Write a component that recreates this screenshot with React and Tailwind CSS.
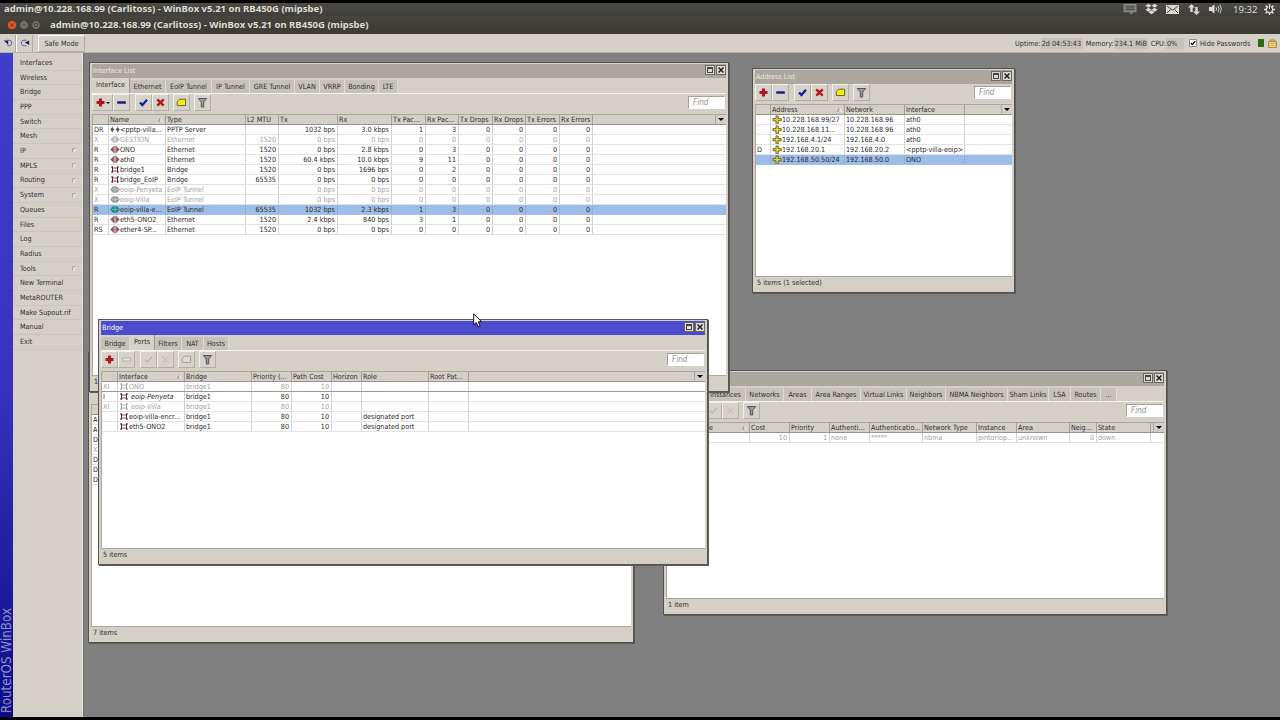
import React from "react";
import clsx from "clsx";
import { FaDropbox } from "react-icons/fa";

const TITLE = "admin@10.228.168.99 (Carlitoss) - WinBox v5.21 on RB450G (mipsbe)";

const MENU = [
  ["Interfaces"], ["Wireless"], ["Bridge"], ["PPP"], ["Switch"], ["Mesh"],
  ["IP", true], ["MPLS", true], ["Routing", true], ["System", true],
  ["Queues"], ["Files"], ["Log"], ["Radius"], ["Tools", true],
  ["New Terminal"], ["MetaROUTER"], ["Make Supout.rif"], ["Manual"], ["Exit"],
];

/* ---------- row icons ---------- */

const EthIcon = ({ color = "#a04a58", bar = "#4a2a30" }) => (
  <svg className="h-[9px] w-[10px] shrink-0" viewBox="0 0 10 9">
    <path d="M.3 4.5 3.4 1.6v5.8zM9.7 4.5 6.6 1.6v5.8z" fill={color} />
    <path d="M4 .8v7.4M6 .8v7.4" stroke={bar} strokeWidth=".9" />
  </svg>
);

const PppIcon = ({ color = "#555" }) => (
  <svg className="h-[9px] w-[10px] shrink-0" viewBox="0 0 10 9">
    <path d="M.2 4.5 2.3 2.2l2.1 2.3-2.1 2.3zM5.6 4.5l2.1-2.3 2.1 2.3-2.1 2.3z" fill={color} />
    <path d="M2.3 1.5v6M7.7 1.5v6" stroke={color} strokeWidth=".6" />
  </svg>
);

const BridgeIcon = ({ color = "#a8404c", bar = "#443034" }) => (
  <svg className="h-[9px] w-[10px] shrink-0" viewBox="0 0 10 9" fill="none">
    <path d="M2.5 3h5M2.5 6h5" stroke={color} strokeWidth="1" />
    <path d="M2.5 1.5v6M7.5 1.5v6M1 2h2M7 2h2M1 7h2M7 7h2" stroke={bar} strokeWidth="1" />
  </svg>
);

const TunnelIcon = ({ color = "#1d8c80" }) => (
  <svg className="h-[9px] w-[10px] shrink-0" viewBox="0 0 10 9">
    <path d="M0 4.5 3 1.2h4l3 3.3-3 3.3H3z" fill={color} />
    <path d="M5 1.5v6M1.5 4.5h7" stroke="#fff" strokeWidth=".7" opacity=".45" />
  </svg>
);

const AddressIcon = () => (
  <svg className="h-[10px] w-[10px] shrink-0" viewBox="0 0 10 10">
    <path d="M4 1h2.2v2.6h3v2.2h-3V9H4V5.8H1V3.6h3z" fill="#e6d84a" stroke="#6a6824" strokeWidth="1" />
  </svg>
);

const ROW_ICONS = {
  eth: <EthIcon />,
  ethOff: <EthIcon color="#b5b5b5" bar="#9a9a9a" />,
  ppp: <PppIcon />,
  bridge: <BridgeIcon />,
  bridgeOff: <BridgeIcon color="#b8b8b8" bar="#a0a0a0" />,
  tunnel: <TunnelIcon />,
  tunnelOff: <TunnelIcon color="#9c9c9c" />,
  addr: <AddressIcon />,
};

/* ---------- toolbar ---------- */

const GLYPHS = {
  add: (off) => <path d="M4 1.5h3V4h2.5v3H7v2.5H4V7H1.5V4H4z" fill={off ? "#bbb" : "#b5161b"} />,
  remove: (off) =>
    off ? (
      <path d="M1.5 4h8v3h-8z" fill="#e4e1da" stroke="#aaa69e" strokeWidth=".8" />
    ) : (
      <path d="M1.2 4.3h8.6v2.4H1.2z" fill="#14148c" />
    ),
  enable: (off) => (
    <path d="M2 5.5 4.4 8 9 2.8" fill="none" stroke={off ? "#bcb8b0" : "#1420a0"} strokeWidth={off ? 1.5 : 2.3} />
  ),
  disable: (off) => (
    <path d="M2.3 2.3l6.4 6.4M8.7 2.3 2.3 8.7" fill="none" stroke={off ? "#c3bfb7" : "#b8161c"} strokeWidth={off ? 1.2 : 2.4} />
  ),
  comment: (off) => (
    <path d="M3.6 2.2h6v6.3H1.2V4.8z" fill={off ? "#dedad3" : "#f2ee1c"} stroke={off ? "#a5a199" : "#6a6a20"} strokeWidth="1" />
  ),
  filter: () => (
    <path d="M1.3 1.5h8.4L6.7 5v5H4.3V5z" fill="#9a9aa4" stroke="#55555d" strokeWidth="1" />
  ),
};

const ToolButton = ({ kind, off, wide }) => (
  <div
    className={clsx(
      "flex h-[17px] shrink-0 items-center justify-center border border-[#b3afa7] border-t-[#f2f0eb] border-l-[#f2f0eb] bg-[#d6d2ca]",
      wide ? "w-[21px]" : "w-[17px]"
    )}
  >
    <svg className="h-[11px] w-[11px]" viewBox="0 0 11 11">
      {GLYPHS[kind](off)}
    </svg>
    {wide && <span className="border-x-2 border-t-2 border-x-transparent border-t-black" />}
  </div>
);

const Toolbar = ({ addMenu, off, noComment }) => (
  <div className="flex h-[20px] shrink-0 items-start pr-px">
    <ToolButton kind="add" wide={addMenu} />
    <ToolButton kind="remove" off={off} />
    <div className="w-[5px]" />
    <ToolButton kind="enable" off={off} />
    <ToolButton kind="disable" off={off} />
    <div className="w-[4px]" />
    {!noComment && (
      <>
        <ToolButton kind="comment" off={off} />
        <div className="w-[4px]" />
      </>
    )}
    <ToolButton kind="filter" />
    <div className="ml-auto mt-[2px] h-[13px] w-[37px] border border-[#a5a199] border-r-white border-b-white bg-white pl-[4px] text-[8px] italic leading-[11px] text-[#8f8f8f]">
      Find
    </div>
  </div>
);

/* ---------- window parts ---------- */

const TabBar = ({ tabs, active }) => (
  <div className="flex h-[16px] shrink-0 items-end border-b border-[#f4f2ee]">
    {tabs.map(([label, w], i) => (
      <div
        key={i}
        style={{ width: w }}
        className={clsx(
          "shrink-0 overflow-hidden whitespace-nowrap border-r text-center",
          i === active
            ? "h-[15px] border-[#9c988f] bg-[#d6d2ca] leading-[14px]"
            : "h-[13px] border-[#dedbd4] bg-[#c6c2ba] leading-[13px]"
        )}
      >
        {label}
      </div>
    ))}
  </div>
);

const Table = ({ columns, rows, sorted = 1 }) => (
  <div className="flex min-h-0 flex-1 flex-col overflow-hidden border-l border-[#aaa69e] bg-white">
    <div className="flex h-[11px] shrink-0 border-t border-b border-t-[#aaa69e] border-b-[#98948c] bg-[#d4d0c8]">
      {columns.map(([label, w], i) => (
        <div
          key={i}
          style={{ width: w }}
          className="flex shrink-0 justify-between overflow-hidden whitespace-nowrap border-r border-[#a5a199] pl-px leading-[10px]"
        >
          <span>{label}</span>
          {i === sorted && (
            <svg className="mr-[2px] mt-[2px] h-[5px] w-[5px]" viewBox="0 0 5 5">
              <path d="M.5 5 2.5.5" stroke="#8f8b83" fill="none" />
              <path d="M2.5.5 4.5 5" stroke="#f4f2ee" fill="none" />
            </svg>
          )}
        </div>
      ))}
      <div className="ml-auto flex w-[11px] items-center justify-center border-l border-[#aaa69e]">
        <span className="border-x-3 border-t-3 border-x-transparent border-t-black" />
      </div>
    </div>
    {rows.map((row, r) => (
      <div
        key={r}
        className={clsx(
          "flex h-[10px] shrink-0 border-b",
          row.sel ? "border-[#a3c0e6] bg-[#9dbde8]" : row.focus ? "border-[#999]" : "border-[#e2e2e2]",
          row.off ? "text-[#a2a2a2]" : "text-[#2b2b2b]"
        )}
      >
        {columns.map(([, w, right], i) => (
          <div
            key={i}
            style={{ width: w }}
            className={clsx(
              "flex shrink-0 items-center overflow-hidden whitespace-nowrap border-r leading-[9px]",
              row.sel ? "border-[#8fadd6]" : "border-[#d2d2d2]",
              right ? "justify-end pr-[2px]" : "pl-px",
              i === 1 && row.italic && "italic"
            )}
          >
            {i === 1 && ROW_ICONS[row.icon]}
            <span className={clsx(i === 1 && row.italic && "ml-[2px]")}>{row.c[i]}</span>
          </div>
        ))}
      </div>
    ))}
  </div>
);

const Window = ({ title, place, active, status, children }) => (
  <div
    className={clsx(
      "absolute flex flex-col border border-[#55534f] bg-[#d4d0c8] px-[2px] pb-[2px] pt-px shadow-[1px_1px_0_#5f5d5a]",
      place
    )}
  >
    <div
      className={clsx(
        "flex h-[14px] shrink-0 items-start pl-px",
        active ? "bg-[#4a4ccb] text-white" : "bg-[#aba79f] text-[#e9e7e2]"
      )}
    >
      <span className="leading-[14px]">{title}</span>
      <div className="ml-auto mt-px flex gap-px">
        <div className="flex h-[10px] w-[10px] items-center justify-center border border-[#6a6862] bg-[#dedad3]">
          <div className="h-[6px] w-[6px] border border-t-2 border-[#444]" />
        </div>
        <div className="flex h-[10px] w-[10px] items-center justify-center border border-[#6a6862] bg-[#dedad3]">
          <svg className="h-[6px] w-[6px]" viewBox="0 0 6 6">
            <path d="M.5.5l5 5M5.5.5l-5 5" stroke="#222" strokeWidth="1.5" />
          </svg>
        </div>
      </div>
    </div>
    {children}
    <div className="h-[14px] shrink-0 border-t border-[#aaa69e] pl-[2px] leading-[12px]">{status}</div>
  </div>
);

/* ---------- data ---------- */

const IFACE_COLS = [
  ["", 16], ["Name", 57], ["Type", 80], ["L2 MTU", 33, true], ["Tx", 59, true],
  ["Rx", 54, true], ["Tx Pac...", 34, true], ["Rx Pac...", 33, true],
  ["Tx Drops", 34, true], ["Rx Drops", 33, true], ["Tx Errors", 34, true], ["Rx Errors", 33, true],
];

const z = ["0", "0", "0", "0"];
const IFACES = [
  { icon: "ppp", c: ["DR", "<pptp-villa...", "PPTP Server", "", "1032 bps", "3.0 kbps", "1", "3", ...z] },
  { icon: "ethOff", off: true, c: ["X", "GESTION", "Ethernet", "1520", "0 bps", "0 bps", "0", "0", ...z] },
  { icon: "eth", c: ["R", "ONO", "Ethernet", "1520", "0 bps", "2.8 kbps", "0", "3", ...z] },
  { icon: "eth", c: ["R", "ath0", "Ethernet", "1520", "60.4 kbps", "10.0 kbps", "9", "11", ...z] },
  { icon: "bridge", c: ["R", "bridge1", "Bridge", "1520", "0 bps", "1696 bps", "0", "2", ...z] },
  { icon: "bridge", c: ["R", "bridge_EoIP", "Bridge", "65535", "0 bps", "0 bps", "0", "0", ...z] },
  { icon: "tunnelOff", off: true, c: ["X", "eoip-Penyeta", "EoIP Tunnel", "", "0 bps", "0 bps", "0", "0", ...z] },
  { icon: "tunnelOff", off: true, c: ["X", "eoip-Villa", "EoIP Tunnel", "", "0 bps", "0 bps", "0", "0", ...z] },
  { icon: "tunnel", sel: true, c: ["R", "eoip-villa-e...", "EoIP Tunnel", "65535", "1032 bps", "2.3 kbps", "1", "3", ...z] },
  { icon: "eth", c: ["R", "eth5-ONO2", "Ethernet", "1520", "2.4 kbps", "840 bps", "3", "1", ...z] },
  { icon: "eth", c: ["RS", "ether4-SP...", "Ethernet", "1520", "0 bps", "0 bps", "0", "0", ...z] },
];

const ADDR_COLS = [["", 15], ["Address", 74], ["Network", 60], ["Interface", 60]];
const ADDRS = [
  { icon: "addr", c: ["", "10.228.168.99/27", "10.228.168.96", "ath0"] },
  { icon: "addr", c: ["", "10.228.168.11...", "10.228.168.96", "ath0"] },
  { icon: "addr", c: ["", "192.168.4.1/24", "192.168.4.0", "ath0"] },
  { icon: "addr", c: ["D", "192.168.20.1", "192.168.20.2", "<pptp-villa-eoip>"] },
  { icon: "addr", sel: true, c: ["", "192.168.50.50/24", "192.168.50.0", "ONO"] },
];

const PORT_COLS = [
  ["", 16], ["Interface", 67], ["Bridge", 67], ["Priority (...", 40, true], ["Path Cost", 40, true],
  ["Horizon", 30], ["Role", 67], ["Root Pat...", 40],
];
const PORTS = [
  { icon: "bridgeOff", off: true, focus: true, c: ["XI", "ONO", "bridge1", "80", "10"] },
  { icon: "bridge", italic: true, c: ["I", "eoip-Penyeta", "bridge1", "80", "10"] },
  { icon: "bridgeOff", off: true, italic: true, c: ["XI", "eoip-Villa", "bridge1", "80", "10"] },
  { icon: "bridge", c: ["", "eoip-villa-encr...", "bridge1", "80", "10", "", "designated port"] },
  { icon: "bridge", c: ["", "eth5-ONO2", "bridge1", "80", "10", "", "designated port"] },
];

const OSPF_COLS = [
  ["", 16], ["Interface", 67], ["Cost", 40, true], ["Priority", 40, true], ["Authenti...", 40],
  ["Authenticatio...", 53], ["Network Type", 54], ["Instance", 40], ["Area", 53], ["Neig...", 27, true], ["State", 54],
];
const OSPF = [
  { off: true, c: ["", "", "10", "1", "none", "*****", "nbma", "pintoriop...", "unknown", "0", "down"] },
];

const ROUTES = ["A", "A", "D", "X", "D", "D", "D"].map((f) => ({ off: f === "X", c: [f] }));

/* ---------- system bars ---------- */

const PanelIcons = () => (
  <div className="ml-auto flex items-center text-[#dcd9d1]">
    <svg className="h-[11px] w-[14px] text-[#8f8d87]" viewBox="0 0 14 11" fill="none" stroke="currentColor">
      <path d="M1 .5h12v7.3h-3L8 10.2V7.8H1z" fill="#77756f" />
      <path d="M3 2.8h8M3 5.3h8" stroke="#45443f" />
    </svg>
    <FaDropbox className="ml-[8px] h-[12px] w-[13px]" />
    <svg className="ml-[8px] h-[9px] w-[13px]" viewBox="0 0 13 9">
      <path d="M0 0h13v9H0z" fill="currentColor" />
      <path d="M1 1l5.5 4.2L12 1M1 8l3.6-3.6M12 8 8.4 4.4" fill="none" stroke="#4a4842" />
    </svg>
    <svg className="ml-[9px] h-[11px] w-[12px]" viewBox="0 0 12 11" fill="currentColor">
      <path d="M3.5 0 7 3.6H4.7V8H2.3V3.6H0zM8.5 11 5 7.4h2.3V3h2.4v4.4H12z" />
    </svg>
    <svg className="ml-[9px] h-[10px] w-[13px]" viewBox="0 0 13 10">
      <path d="M0 3h2.3L5.5.3v9.4L2.3 7H0z" fill="currentColor" />
      <path d="M7 3.2q1.2 1.8 0 3.6M9 1.8q2 3.2 0 6.4M11 .6q2.8 4.4 0 8.8" fill="none" stroke="currentColor" strokeWidth=".9" />
    </svg>
    <span className="ml-[11px] w-[23px] font-['Noto_Sans',sans-serif] text-[9.6px] leading-[11px]">19:32</span>
    <svg className="ml-[8px] mr-[5px] h-[11px] w-[11px]" viewBox="0 0 11 11" fill="none" stroke="currentColor">
      <circle cx="5.5" cy="5.5" r="3.2" strokeWidth="1.3" />
      <path d="M5.5 0v2M5.5 9v2M0 5.5h2M9 5.5h2M1.6 1.6 3 3M8 8l1.4 1.4M9.4 1.6 8 3M3 8 1.6 9.4" strokeWidth="1.5" />
      <path d="M5.5 1.5v4" stroke="#3f3e3a" strokeWidth="2.4" />
      <path d="M5.5 0v5" strokeWidth="1.1" />
    </svg>
  </div>
);

const Stat = ({ label, value, w }) => (
  <>
    <span>{label}</span>
    <span style={{ width: w }} className="mr-[3px] h-[11px] overflow-hidden whitespace-nowrap bg-[#c6c2ba] pl-px leading-[11px]">
      {value}
    </span>
  </>
);

export default function App() {
  return (
    <div className="flex h-[720px] w-[1280px] flex-col overflow-hidden bg-black py-[3px] font-['DejaVu_Sans_Condensed','DejaVu_Sans',sans-serif] text-[7.2px] text-[#2f2f2f]">
      {/* Desktop panel */}
      <header className="flex h-[13px] shrink-0 items-start bg-gradient-to-b from-[#4b4a45] to-[#403f3b] pl-[4px]">
        <span className="whitespace-nowrap font-['Noto_Sans',sans-serif] text-[9.52px] font-bold leading-[11px] text-[#dfdbd2]">
          {TITLE}
        </span>
        <PanelIcons />
      </header>

      {/* Application title bar */}
      <div className="flex h-[18px] shrink-0 items-center bg-gradient-to-b from-[#45443f] to-[#3b3a36] pl-[7px]">
        <div className="flex w-[43px] gap-[2px]">
          <svg className="h-[10px] w-[10px]" viewBox="0 0 10 10">
            <circle cx="5" cy="5" r="4.6" fill="#e4572c" stroke="#34332f" strokeWidth=".6" />
            <path d="M3.3 3.3l3.4 3.4M6.7 3.3 3.3 6.7" stroke="#8e3a1e" strokeWidth="1.1" />
          </svg>
          <svg className="h-[10px] w-[10px]" viewBox="0 0 10 10">
            <circle cx="5" cy="5" r="4.4" fill="#72706a" stroke="#34332f" strokeWidth=".6" />
            <path d="M3 5h4" stroke="#4c4b46" />
          </svg>
          <svg className="h-[10px] w-[10px]" viewBox="0 0 10 10">
            <circle cx="5" cy="5" r="4.4" fill="#72706a" stroke="#34332f" strokeWidth=".6" />
            <path d="M3.3 3.5h3.4v3H3.3z" stroke="#4c4b46" fill="none" />
          </svg>
        </div>
        <span className="mb-px whitespace-nowrap font-['Noto_Sans',sans-serif] text-[9.52px] font-bold leading-[12px] text-[#dfdbd2]">
          {TITLE}
        </span>
      </div>

      {/* Main toolbar */}
      <div className="flex h-[19px] shrink-0 items-center border-b border-[#b5b1a9] bg-[#d4d0c8]">
        <div className="flex h-[17px] w-[16px] items-center justify-center border-r border-[#b0aca4]">
          <svg className="h-[8px] w-[10px]" viewBox="0 0 10 8" fill="none" stroke="#6a6a9c">
            <path d="M4 1.2h2a2.8 2.8 0 0 1 0 5.6H4.5" />
            <path d="M.8 1.5h4.4v4.4z" fill="#22225c" stroke="none" />
          </svg>
        </div>
        <div className="flex h-[17px] w-[17px] items-center justify-center border-r border-l border-r-[#b0aca4] border-l-white">
          <svg className="h-[8px] w-[10px]" viewBox="0 0 10 8" fill="none" stroke="#6a6a9c">
            <path d="M6.5 1.2H4a2.8 2.8 0 0 0 0 5.6h2.5" />
            <path d="M9.2 1.5v4.4L4.8 3.6z" fill="#22225c" stroke="none" />
          </svg>
        </div>
        <div className="ml-[5px] h-[17px] w-[47px] border border-[#b0aca4] border-t-white border-l-white text-center leading-[16px]">
          Safe Mode
        </div>
        <div className="ml-auto flex items-center leading-[11px]">
          <Stat label="Uptime:" value="2d 04:53:43" w={42} />
          <Stat label="Memory:" value="234.1 MiB" w={34} />
          <Stat label="CPU:" value="0%" w={18} />
          <svg className="ml-[2px] mr-[3px] h-[8px] w-[8px]" viewBox="0 0 8 8">
            <path d="M.5.5h7v7h-7z" fill="#fff" stroke="#8f8b83" />
            <path d="M1.8 4l1.6 1.7L6.3 2.2" fill="none" stroke="#000" strokeWidth="1.2" />
          </svg>
          <span className="w-[58px] whitespace-nowrap">Hide Passwords</span>
          <div className="h-[8px] w-[6px] bg-[#2c6b12]" />
          <svg className="ml-[4px] mr-[3px] h-[9px] w-[9px]" viewBox="0 0 9 9">
            <path d="M2.2 3V1h4.6v2" fill="none" stroke="#a08a40" />
            <path d="M.5 2.5h8v6h-8z" fill="#e9d58c" stroke="#b58f30" />
            <path d="M1 4.5h7M1 6.5h7" stroke="#c9a955" strokeWidth=".8" />
          </svg>
        </div>
      </div>

      <div className="flex min-h-0 flex-1">
        {/* Brand strip */}
        <div className="flex w-[13px] shrink-0 items-center bg-gradient-to-b from-[#3f3dcb] via-[#3533c0] to-[#0c0a86] pb-[4px] [writing-mode:vertical-rl]">
          <span className="mt-auto rotate-180 whitespace-nowrap text-[13.3px] leading-[13px] text-[#8f8fc4]">RouterOS WinBox</span>
        </div>

        {/* Side menu */}
        <nav className="w-[70px] shrink-0 border-r border-[#e6e3dd] bg-[#d4d0c8] pt-[3px]">
          {MENU.map(([label, sub]) => (
            <div
              key={label}
              className="flex h-[14.69px] items-center justify-between border-b border-[#c9c5bd] pl-[7px] pr-[5px] pt-px"
            >
              <span className="whitespace-nowrap">{label}</span>
              {sub && (
                <svg className="h-[6px] w-[5px]" viewBox="0 0 5 6" fill="none">
                  <path d="M.5 6V.5h4" stroke="#aca89f" />
                  <path d="M4.5.5.5 5.5" stroke="#f4f2ee" />
                </svg>
              )}
            </div>
          ))}
        </nav>

        {/* Workspace */}
        <main className="relative flex-1 overflow-hidden border-l border-[#6e6e6e] bg-[#808080]">
          <Window place="left-[4px] top-[299px] h-[291px] w-[546px]" status="7 items">
            <div className="h-[36px] shrink-0" />
            <Table columns={[["", 16]]} rows={ROUTES} sorted={-1} />
          </Window>

          <Window place="left-[579px] top-[317px] h-[245px] w-[504px]" status="1 item">
            <TabBar
              active={-1}
              tabs={[
                ["", 40], ["Instances", 40], ["Networks", 38], ["Areas", 28], ["Area Ranges", 49], ["Virtual Links", 46],
                ["Neighbors", 39], ["NBMA Neighbors", 62], ["Sham Links", 41], ["LSA", 22], ["Routes", 30], ["...", 16],
              ]}
            />
            <Toolbar off noComment />
            <Table columns={OSPF_COLS} rows={OSPF} />
          </Window>

          <Window place="left-[5px] top-[9px] h-[330px] w-[640px]" title="Interface List" status="11 items">
            <TabBar
              active={0}
              tabs={[
                ["Interface", 38], ["Ethernet", 36], ["EoIP Tunnel", 46], ["IP Tunnel", 38], ["GRE Tunnel", 45],
                ["VLAN", 25], ["VRRP", 25], ["Bonding", 34], ["LTE", 19],
              ]}
            />
            <Toolbar addMenu />
            <Table columns={IFACE_COLS} rows={IFACES} />
          </Window>

          <Window place="left-[668px] top-[15px] h-[225px] w-[263px]" title="Address List" status="5 items (1 selected)">
            <Toolbar />
            <Table columns={ADDR_COLS} rows={ADDRS} />
          </Window>

          <Window place="left-[14px] top-[266px] h-[246px] w-[610px]" title="Bridge" active status="5 items">
            <TabBar
              active={1}
              tabs={[["Bridge", 29], ["Ports", 25], ["Filters", 27], ["NAT", 22], ["Hosts", 25]]}
            />
            <Toolbar off />
            <Table columns={PORT_COLS} rows={PORTS} />
          </Window>

          {/* Mouse pointer */}
          <svg className="absolute left-[389px] top-[260px] h-[15px] w-[10px]" viewBox="0 0 10 15">
            <path d="M.7.8v11l2.6-2.3 1.8 4.2 2-.9-1.8-4h3.4z" fill="#fff" stroke="#111" strokeWidth="1" />
          </svg>
        </main>
      </div>
    </div>
  );
}
